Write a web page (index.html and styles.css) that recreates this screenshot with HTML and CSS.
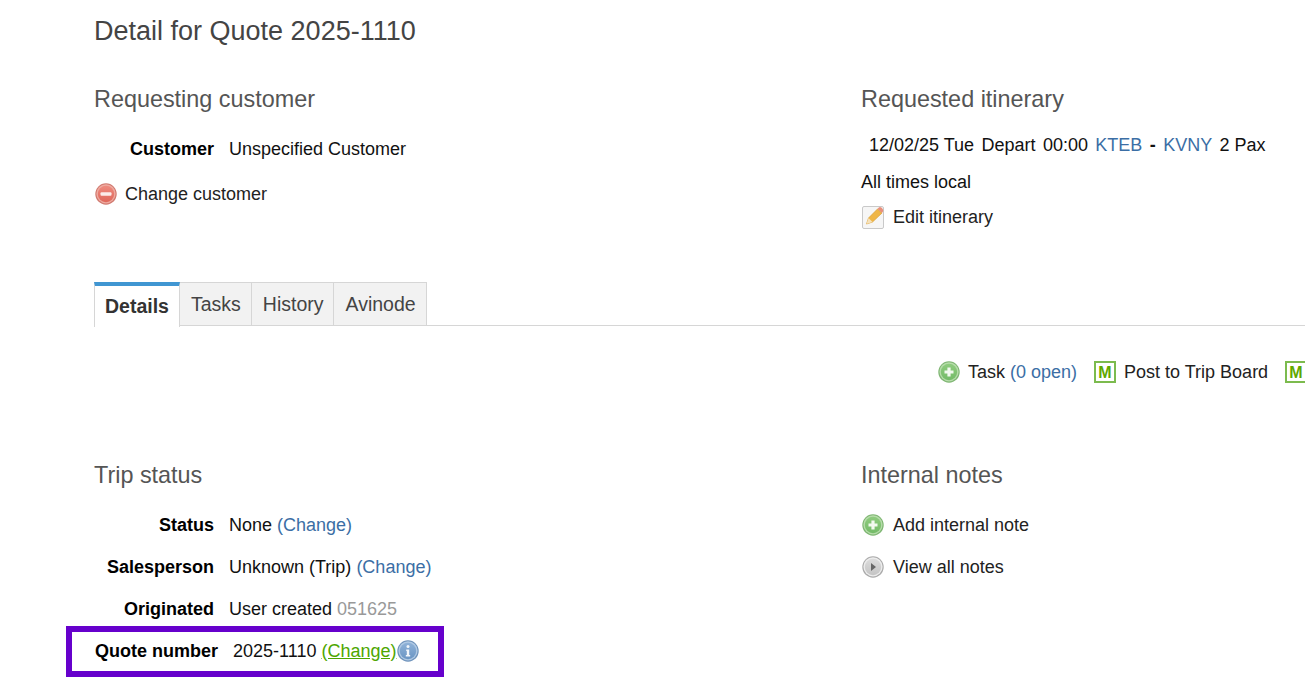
FILE: index.html
```html
<!DOCTYPE html>
<html lang="en">
<head>
<meta charset="utf-8">
<title>Detail for Quote 2025-1110</title>
<link rel="stylesheet" href="styles.css">
</head>
<body>
<svg class="defs" width="0" height="0" aria-hidden="true">
  <defs>
    <linearGradient id="gGreen" x1="0" y1="0" x2="0" y2="1"><stop offset="0" stop-color="#8ecb7e"/><stop offset="1" stop-color="#74bb68"/></linearGradient>
    <linearGradient id="gRed" x1="0" y1="0" x2="0" y2="1"><stop offset="0" stop-color="#ee8a7e"/><stop offset="1" stop-color="#df675b"/></linearGradient>
    <linearGradient id="gGrey" x1="0" y1="0" x2="0" y2="1"><stop offset="0" stop-color="#dcdcdc"/><stop offset="1" stop-color="#c4c4c4"/></linearGradient>
    <linearGradient id="gBlue" x1="0" y1="0" x2="0" y2="1"><stop offset="0" stop-color="#8fb2d8"/><stop offset="1" stop-color="#6a95c4"/></linearGradient>
  </defs>
</svg>
<main class="page">
  <h1 class="title">Detail for Quote 2025-1110</h1>

  <div class="columns top">
    <section class="col">
      <h2 class="heading">Requesting customer</h2>
      <div class="row first-row"><span class="label">Customer</span><span class="value">Unspecified Customer</span></div>
      <div class="action change-customer">
        <svg class="icon" viewBox="0 0 22 22"><circle cx="11" cy="11" r="10.7" fill="#d17a70"/><circle cx="11" cy="10.8" r="9.6" fill="#eeaaa0"/><circle cx="11" cy="11" r="8.2" fill="url(#gRed)"/><rect x="5.5" y="9.2" width="11" height="3.6" rx="1" fill="#fbecea"/></svg>
        <span>Change customer</span>
      </div>
    </section>
    <section class="col">
      <h2 class="heading">Requested itinerary</h2>
      <div class="itinerary">
        <span>12/02/25 Tue</span><span>Depart</span><span>00:00</span><a class="link">KTEB</a><span class="dash">-</span><a class="link">KVNY</a><span>2 Pax</span>
      </div>
      <div class="local">All times local</div>
      <div class="action edit-itinerary">
        <svg class="icon" viewBox="0 0 22 24"><rect x="0.5" y="1.5" width="21" height="22" rx="1.5" fill="#f6f6f6" stroke="#c9c9c9"/><path d="M4.5 19 L6.5 13 L15.5 4 L20 8 L10.5 17 Z" fill="#efb647" stroke="#d99f35" stroke-width=".7"/><path d="M15.5 4 L20 8 L21.3 6 Q21.3 4.2 19.7 2.8 Q18 1.6 16.8 2.5 Z" fill="#e8907c"/><path d="M4.5 19 L6.5 13 L10.5 17 Z" fill="#f6e2bb"/></svg>
        <span>Edit itinerary</span>
      </div>
    </section>
  </div>

  <nav class="tabs">
    <div class="tab active">Details</div>
    <div class="tab">Tasks</div>
    <div class="tab">History</div>
    <div class="tab">Avinode</div>
  </nav>

  <div class="toolbar">
    <div class="tool">
      <svg class="icon" viewBox="0 0 22 22"><circle cx="11" cy="11" r="10.7" fill="#7fb673"/><circle cx="11" cy="10.8" r="9.6" fill="#b6dcaa"/><circle cx="11" cy="11" r="8.2" fill="url(#gGreen)"/><path d="M9.4 6.5h3.2v2.9h2.9v3.2h-2.9v2.9H9.4v-2.9H6.5V9.4h2.9z" fill="#f2f9ef"/></svg>
      <span>Task <a class="link">(0 open)</a></span>
    </div>
    <div class="tool">
      <svg class="icon m-icon" viewBox="0 0 22 22"><rect x="1" y="1" width="20" height="20" fill="#fff" stroke="#7cbb4e" stroke-width="2"/><text x="11" y="16.5" class="m-letter">M</text></svg>
      <span>Post to Trip Board</span>
    </div>
    <div class="tool">
      <svg class="icon m-icon" viewBox="0 0 22 22"><rect x="1" y="1" width="20" height="20" fill="#fff" stroke="#7cbb4e" stroke-width="2"/><text x="11" y="16.5" class="m-letter">M</text></svg>
    </div>
  </div>

  <div class="columns bottom">
    <section class="col">
      <h2 class="heading">Trip status</h2>
      <div class="row first-row"><span class="label">Status</span><span class="value">None <a class="link">(Change)</a></span></div>
      <div class="row"><span class="label">Salesperson</span><span class="value">Unknown (Trip) <a class="link">(Change)</a></span></div>
      <div class="row"><span class="label">Originated</span><span class="value">User created <span class="muted">051625</span></span></div>
      <div class="row highlight">
        <span class="label">Quote number</span>
        <span class="value">2025-1110 <a class="link-green">(Change)</a></span>
        <svg class="icon info" viewBox="0 0 22 22"><circle cx="11" cy="11" r="10.7" fill="#6f93bb"/><circle cx="11" cy="10.8" r="9.6" fill="#b0c9e4"/><circle cx="11" cy="11" r="8.2" fill="url(#gBlue)"/><circle cx="11" cy="6.6" r="1.5" fill="#f2f6fb"/><path d="M9.2 9.5h3v5.6h1v1.4H8.8v-1.4h1v-4.2h-.6z" fill="#f2f6fb"/></svg>
      </div>
    </section>
    <section class="col">
      <h2 class="heading">Internal notes</h2>
      <div class="action first-row">
        <svg class="icon" viewBox="0 0 22 22"><circle cx="11" cy="11" r="10.7" fill="#7fb673"/><circle cx="11" cy="10.8" r="9.6" fill="#b6dcaa"/><circle cx="11" cy="11" r="8.2" fill="url(#gGreen)"/><path d="M9.4 6.5h3.2v2.9h2.9v3.2h-2.9v2.9H9.4v-2.9H6.5V9.4h2.9z" fill="#f2f9ef"/></svg>
        <span>Add internal note</span>
      </div>
      <div class="action view-notes">
        <svg class="icon" viewBox="0 0 22 22"><circle cx="11" cy="11" r="10.7" fill="#ababab"/><circle cx="11" cy="10.8" r="9.6" fill="#ececec"/><circle cx="11" cy="11" r="8.2" fill="url(#gGrey)"/><path d="M9 7 L14 11 L9 15 Z" fill="#666"/></svg>
        <span>View all notes</span>
      </div>
    </section>
  </div>
</main>
</body>
</html>
```
FILE: styles.css
```css
html, body {
  margin: 0;
  padding: 0;
  height: 677px;
  overflow: hidden;
  background: #fff;
}
body {
  font-family: "Liberation Sans", Arial, sans-serif;
  font-size: 18px;
  line-height: 24px;
  color: #111;
}
.defs { position: absolute; }
.page {
  padding: 12px 0 0 94px;
  width: 1211px;
}
.title {
  margin: 0;
  font-size: 27px;
  line-height: 38px;
  font-weight: 400;
  color: #444;
}
.columns { display: flex; }
.col { width: 767px; flex: none; }
.col + .col { width: 444px; }
.top { margin-top: 31px; height: 201px; }
.heading {
  margin: 0;
  font-size: 23.4px;
  line-height: 36px;
  font-weight: 400;
  color: #555;
}
.row {
  display: flex;
  height: 24px;
  margin-top: 18px;
  white-space: nowrap;
}
.row.first-row { margin-top: 20px; }
.label {
  width: 120px;
  text-align: right;
  font-weight: 700;
  color: #000;
  margin-right: 15px;
  flex: none;
}
.link { color: #3b6ea5; }
.link-green { color: #4ea600; text-decoration: underline; }
.muted { color: #999; }
.action {
  display: flex;
  align-items: center;
  gap: 8px;
  height: 24px;
  color: #222;
  white-space: nowrap;
}
.action .icon { margin-left: 1px; }
.col + .col .action { gap: 9px; }
.action.first-row { margin-top: 20px; }
.change-customer { margin-top: 21px; }
.view-notes { margin-top: 18px; }
.edit-itinerary { margin-top: 11px; }
.icon { width: 22px; height: 22px; flex: none; display: block; }
.edit-itinerary .icon { height: 24px; }
.itinerary {
  display: flex;
  gap: 7.4px;
  padding-left: 8px;
  margin-top: 16px;
  color: #111;
  white-space: nowrap;
}
.dash { font-weight: 700; }
.local { margin-top: 13px; color: #111; }
.tabs {
  display: flex;
  height: 43px;
  border-bottom: 1px solid #d6d6d6;
  box-sizing: content-box;
}
.tab {
  padding: 8px 10px 0 11px;
  background: #f2f2f2;
  border: 1px solid #d6d6d6;
  border-left: 0;
  border-bottom: 0;
  color: #444;
  font-size: 19.5px;
  line-height: 26px;
}
.tab.active {
  background: #fff;
  border-top: 4px solid #4096d2;
  border-left: 1px solid #d6d6d6;
  border-bottom: 0;
  height: 34px;
  padding: 7px 10px 0;
  font-weight: 700;
  color: #333;
}
.toolbar {
  display: flex;
  gap: 17px;
  margin-top: 34px;
  padding-left: 844px;
  height: 24px;
  width: 380px;
  white-space: nowrap;
}
.tool {
  display: flex;
  align-items: center;
  gap: 8px;
  color: #222;
}
.m-letter {
  font: 700 16px "Liberation Sans", Arial, sans-serif;
  fill: #5fa800;
  text-anchor: middle;
}
.bottom { margin-top: 73px; }
.highlight {
  margin: 5px 0 0 -28px;
  width: 343px;
  height: 38px;
  padding-bottom: 1px;
  border: 6px solid #6600cc;
  padding-left: 23px;
  align-items: center;
}
.highlight .label { width: 123px; }
.highlight .value { margin-right: 1px; }
```
